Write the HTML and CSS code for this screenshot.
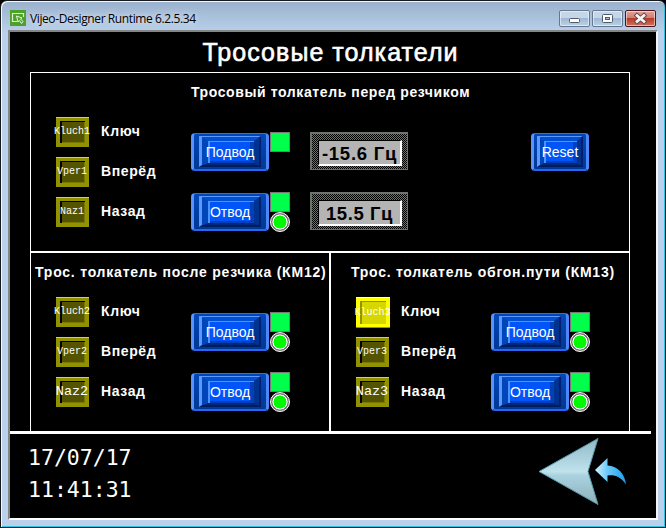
FILE: index.html
```html
<!DOCTYPE html>
<html lang="ru">
<head>
<meta charset="utf-8">
<title>Vijeo-Designer Runtime 6.2.5.34</title>
<link rel="stylesheet" href="styles.css">
</head>
<body>
<div class="window">
  <header class="titlebar">
    <svg class="app-icon" width="16" height="16" viewBox="0 0 16 16">
      <rect width="16" height="16" fill="#4fa02a"/>
      <path d="M7 11.5H2.5V3.5H13.500V7" fill="none" stroke="#d9f3c9" stroke-width="1.2"/>
      <path d="M6.500 6L12 8L10.500 9L13 11.500L11.500 13.500L9.300 10.500L8 12Z" fill="#4fa02a" stroke="#e8f8df" stroke-width="1"/>
    </svg>
    <span class="app-title">Vijeo-Designer Runtime 6.2.5.34</span>
    <div class="controls">
      <span class="control"><svg width="29" height="15"><rect x="9.500" y="7.500" width="10" height="4" rx="1" fill="#fff" stroke="#505a6b"/></svg></span>
      <span class="control"><svg width="29" height="15"><rect x="9.500" y="3.500" width="10" height="8" rx="1" fill="#fff" stroke="#505a6b"/><rect x="12.500" y="6.500" width="4" height="2" fill="#a9c0da" stroke="#505a6b"/></svg></span>
      <span class="control close"><svg width="29" height="15"><path d="M11 4.500L18 10.500M18 4.500L11 10.500" stroke="#5a4650" stroke-width="4.600" stroke-linecap="square"/><path d="M11 4.500L18 10.500M18 4.500L11 10.500" stroke="#f4f4f4" stroke-width="2.700" stroke-linecap="square"/></svg></span>
    </div>
  </header>

  <main class="screen">
    <h1 class="title">Тросовые толкатели</h1>
    <div class="panels">
      <section class="panel wide">
        <h2 class="heading h-front">Тросовый толкатель перед резчиком</h2>
        <div class="body">
          <div class="lamps">
            <div class="lamp"><span>Kluch1</span></div>
            <div class="lamp"><span>Vper1</span></div>
            <div class="lamp"><span>Naz1</span></div>
          </div>
          <div class="labels"><span>Ключ</span><span>Вперёд</span><span>Назад</span></div>
          <div class="drives">
            <div class="drive"><button class="btn"><span>Подвод</span></button><div class="marks"><i class="square"></i></div></div>
            <div class="drive"><button class="btn"><span>Отвод</span></button><div class="marks"><i class="square"></i><i class="round"></i></div></div>
          </div>
          <div class="displays">
            <div class="display"><output>-15.6 Гц</output></div>
            <div class="display"><output class="short">15.5 Гц</output></div>
          </div>
          <button class="btn reset"><span>Reset</span></button>
        </div>
      </section>

      <section class="panel left">
        <h2 class="heading h-after">Трос. толкатель после резчика (КМ12)</h2>
        <div class="body">
          <div class="lamps">
            <div class="lamp"><span>Kluch2</span></div>
            <div class="lamp"><span>Vper2</span></div>
            <div class="lamp large"><span>Naz2</span></div>
          </div>
          <div class="labels"><span>Ключ</span><span>Вперёд</span><span>Назад</span></div>
          <div class="drives">
            <div class="drive"><button class="btn"><span>Подвод</span></button><div class="marks"><i class="square"></i><i class="round"></i></div></div>
            <div class="drive"><button class="btn"><span>Отвод</span></button><div class="marks"><i class="square"></i><i class="round"></i></div></div>
          </div>
        </div>
      </section>

      <section class="panel right">
        <h2 class="heading h-bypass">Трос. толкатель обгон.пути (КМ13)</h2>
        <div class="body">
          <div class="lamps">
            <div class="lamp lit"><span>Kluch3</span></div>
            <div class="lamp"><span>Vper3</span></div>
            <div class="lamp large"><span>Naz3</span></div>
          </div>
          <div class="labels"><span>Ключ</span><span>Вперёд</span><span>Назад</span></div>
          <div class="drives">
            <div class="drive"><button class="btn"><span>Подвод</span></button><div class="marks"><i class="square"></i><i class="round"></i></div></div>
            <div class="drive"><button class="btn"><span>Отвод</span></button><div class="marks"><i class="square"></i><i class="round"></i></div></div>
          </div>
        </div>
      </section>
    </div>

    <footer class="footer">
      <div class="clock"><time>17/07/17</time><time>11:41:31</time></div>
      <svg class="back" width="90" height="70" viewBox="0 0 90 70">
        <defs>
          <linearGradient id="head" x1="0" y1="0" x2="0" y2="1">
            <stop offset="0" stop-color="#8fb9c6"/><stop offset=".5" stop-color="#c0e2ec"/>
            <stop offset=".56" stop-color="#a9d2de"/><stop offset="1" stop-color="#8fb0bd"/>
          </linearGradient>
          <linearGradient id="curve" x1="0" y1="0" x2="1" y2="0">
            <stop offset="0" stop-color="#d4f2ff"/><stop offset=".4" stop-color="#6ccaf8"/><stop offset="1" stop-color="#1d9cec"/>
          </linearGradient>
        </defs>
        <path d="M1 34.500L60 1.500L50 34.500L60 67.500Z" fill="url(#head)" stroke="#5597a8" stroke-width="1"/>
        <path d="M57 33L69.500 21V28.500C80 29 87 37 88 47.500C82 39 76 37.500 69.500 38.500V45Z" fill="url(#curve)"/>
      </svg>
    </footer>
  </main>
</div>
</body>
</html>
```

FILE: styles.css
```css
* { box-sizing: border-box; }

html, body { margin: 0; width: 666px; height: 528px; overflow: hidden; background: #000; }

.window {
  width: 666px;
  height: 528px;
  padding: 0 7px;
  border: 1px solid #17191c;
  border-radius: 7px 7px 0 0;
  background: linear-gradient(#9ab1cd, #b9d1ea 32px, #b9d1ea);
  box-shadow: inset 1px 1px #f4f9fd, inset -1px -1px #35c4dd;
}

/* Title bar */
.titlebar {
  display: flex;
  align-items: flex-start;
  height: 29px;
  padding: 9px 2px 0;
}
.app-icon { display: block; }
.app-title {
  margin: 0 0 0 4px;
  font: 12px/17px "Open Sans", sans-serif;
  letter-spacing: -0.4px;
  color: #000;
  text-shadow: 0 0 6px #fff;
  white-space: nowrap;
}
.controls { display: flex; gap: 2px; margin-left: auto; }
.control {
  width: 31px;
  height: 17px;
  border: 1px solid #66788f;
  border-radius: 2px;
  background: linear-gradient(#c5d6e8 45%, #9fb9d3 50%, #bbd2e8);
  box-shadow: inset 0 0 0 1px rgba(255, 255, 255, .5);
}
.control svg { display: block; }
.close {
  border-color: #4b1520;
  background: linear-gradient(#e3a197, #d08071 45%, #b73a27 50%, #cf765f);
}

/* Runtime screen */
.screen {
  display: flex;
  flex-direction: column;
  width: 650px;
  height: 490px;
  border: 2px solid;
  border-color: #858585 #f4f4f4 #fff #858585;
  background: #000;
  color: #fff;
  font-family: "Liberation Sans", Arial, sans-serif;
}
.title {
  margin: 0;
  height: 40px;
  width: 641px;
  text-align: center;
  font-size: 25px;
  font-weight: 400;
  line-height: 41px;
  letter-spacing: 1.05px;
  -webkit-text-stroke: 0.6px #fff;
}
.panels {
  display: grid;
  grid-template: 179px 180px / 299px 301px;
  width: 600px;
  margin-left: 20px;
}
.panel { border: 0 solid #fff; }
.wide { grid-column: 1 / 3; border-width: 1px 1px 0; }
.left { border-width: 2px 0 0 1px; }
.right { border-width: 2px 1px 0 2px; }
.heading {
  margin: 0;
  height: 44px;
  font-size: 14px;
  line-height: 39px;
  white-space: nowrap;
}
.h-front { padding-left: 160px; letter-spacing: 0.6px; }
.h-after { padding-left: 4px; letter-spacing: 0.78px; }
.h-bypass { padding-left: 20px; letter-spacing: 0.73px; }

.body { display: flex; align-items: flex-start; padding-left: 25px; }
.lamps { display: grid; grid-auto-rows: 40px; width: 45px; }
.lamp {
  display: flex;
  align-items: center;
  justify-content: center;
  width: 33px;
  height: 30px;
  border: 4px solid #929200;
  border-image: linear-gradient(#dede00 0 1px, #929200 1px) 4;
  background: #545400;
  box-shadow: inset 2px 1px #000, inset -1px -1px #797900;
  font: 10px/12px "Liberation Mono", monospace;
}
.lamp span { flex: none; margin-right: 1px; }
.large { font-size: 13.500px; }
.lit {
  width: 34px;
  height: 31px;
  border-image: linear-gradient(#fff 0 1px, #ff0 1px 30px, #929200 30px) 4;
  background: #d6d600;
  box-shadow: inset 2px 1px #929200;
}
.labels {
  display: grid;
  grid-auto-rows: 40px;
  width: 90px;
  font-size: 14px;
  font-weight: 700;
  line-height: 29px;
  letter-spacing: 0.6px;
}
.drives, .displays { display: grid; grid-auto-rows: 60px; padding-top: 15px; }
.drives { width: 119px; }
.drive { display: flex; }
.drive .btn { margin-top: 1px; }
.marks { margin-left: 1px; }
.square { display: block; width: 20px; height: 20px; border: 1px solid #777; background: #00ff4a; }
.round {
  display: block;
  width: 20px;
  height: 20px;
  border: 1px solid #fff;
  border-radius: 50%;
  background: radial-gradient(circle, #00fa00 0 6.300px, #fff 6.700px 7.300px, #777 7.800px);
}

/* Bevelled push buttons */
.btn {
  display: grid;
  width: 78px;
  height: 38px;
  padding: 2px 5px;
  border: solid;
  border-width: 1px 3px 2px;
  border-color: #2f6cf0 #4c86f8 #2867ee #5a92ff;
  border-radius: 4px;
  background: linear-gradient(#0048b8, #003894);
  color: #fff;
  font: 14px/19px "Liberation Sans", Arial, sans-serif;
}
.btn::before {
  content: "";
  grid-area: 1 / 1;
  border: solid;
  border-width: 5px 7px 4px 9px;
  border-color: #0050d0 #003290 #002878 #0046b8;
  background: #0054f8;
  box-shadow: inset 2px 1px #4f92ff, inset -4px -2px #0040bd;
}
.btn::after {
  content: "";
  grid-area: 1 / 1;
  border: solid;
  border-width: 1px 2px 2px 3px;
  border-color: #5c98ff #001f70 #001c60 #5c98ff;
}
.btn span { grid-area: 1 / 1; place-self: center; z-index: 1; padding-top: 2px; white-space: nowrap; }
.displays { width: 221px; }
.display {
  width: 98px;
  height: 38px;
  padding: 6px 5px 4px 6px;
  border: solid #6c746c;
  border-width: 2px 1px 1px 2px;
  background: repeating-conic-gradient(#6c746c 0 25%, #000 0 50%) 0 0 / 2px 2px;
}
.display output {
  display: block;
  height: 26px;
  border: solid;
  border-width: 1px 2px 2px 1px;
  border-color: #000 #fff #fff #000;
  background: #b4b4b4;
  color: #000;
  text-align: center;
  font-size: 18.500px;
  font-weight: 700;
  line-height: 25px;
  letter-spacing: 0.75px;
  white-space: nowrap;
}
.display .short { letter-spacing: 0.6px; }
.reset { width: 58px; margin-top: 16px; padding: 2px 3px; }
.reset::before { border-width: 5px 6px 4px 7px; }

/* Clock and back navigation */
.footer { display: flex; justify-content: space-between; width: 641px; flex: 1; border-top: 3px solid #fff; }
.clock {
  display: grid;
  grid-auto-rows: 32px;
  padding: 8px 0 0 18px;
  font: 21.500px/32px "DejaVu Sans Mono", monospace;
}
.back { display: block; margin: 3px 23px 0 0; }
```
